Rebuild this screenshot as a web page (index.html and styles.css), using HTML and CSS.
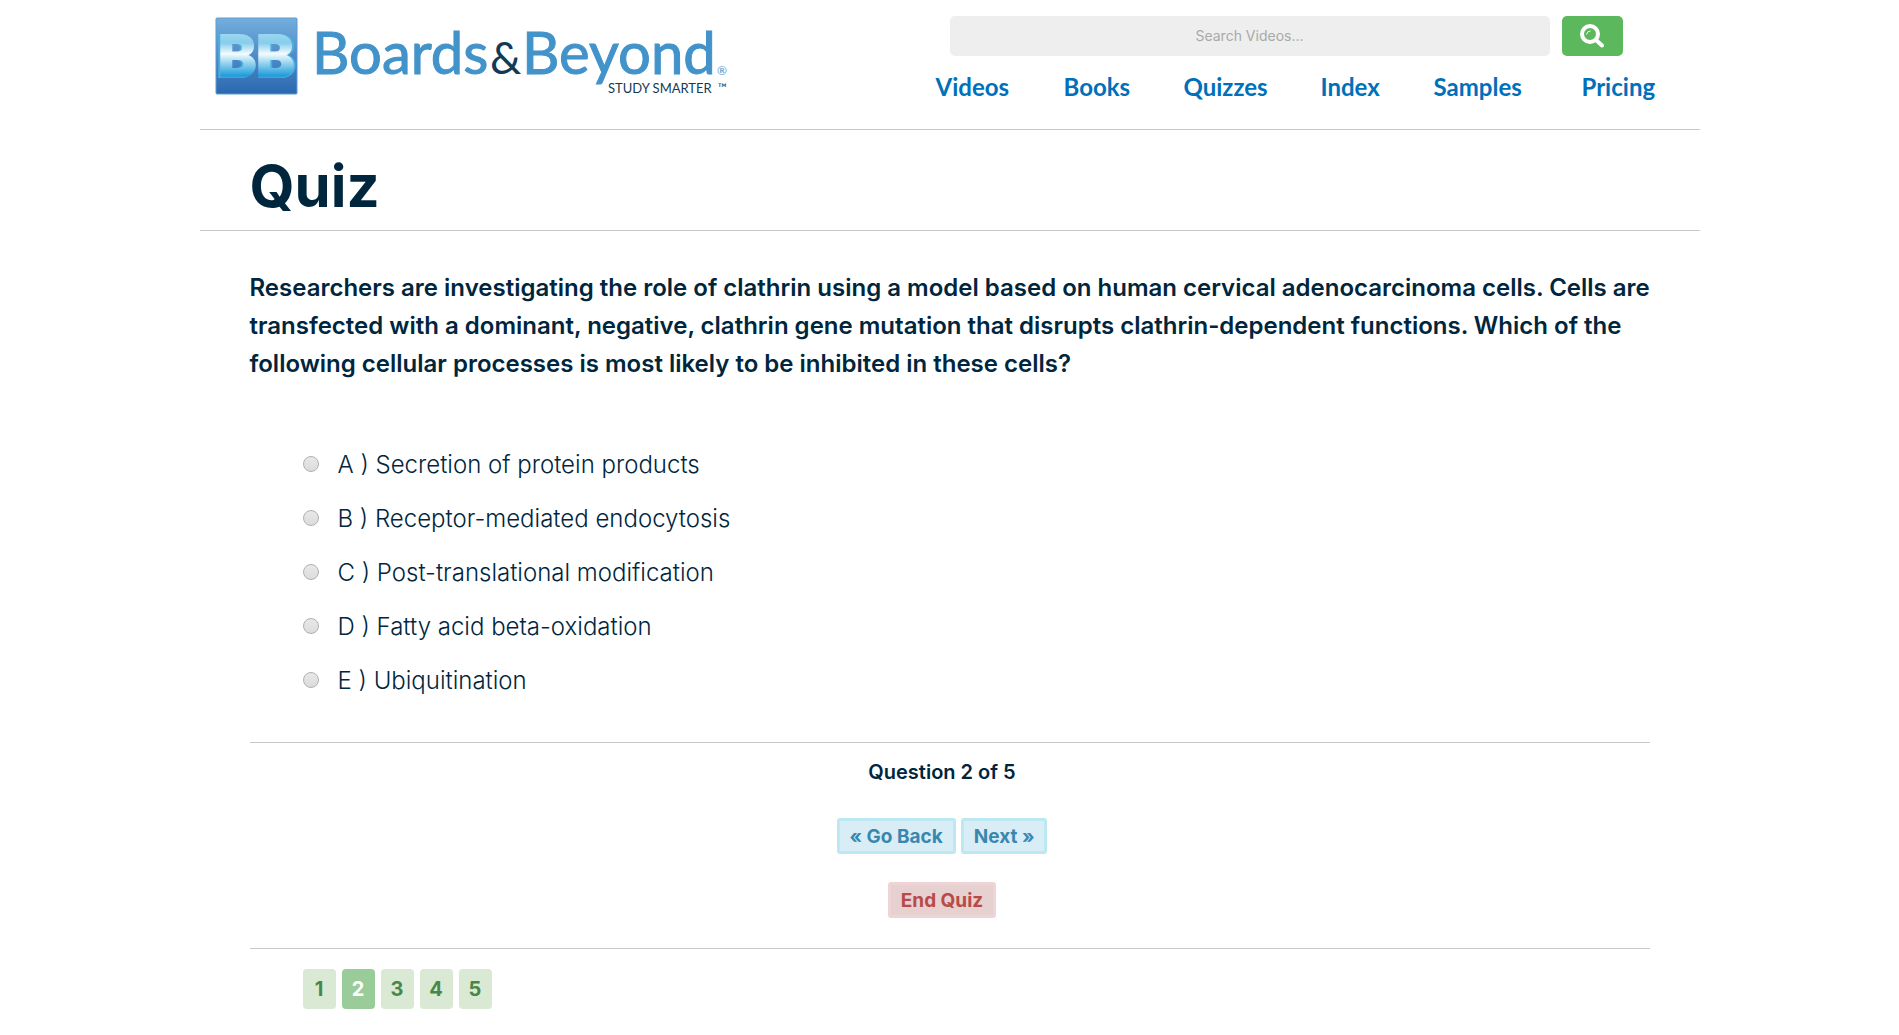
FILE: index.html
```html
<!DOCTYPE html>
<html lang="en">
<head>
<meta charset="utf-8">
<meta name="viewport" content="width=device-width, initial-scale=1">
<title>Quiz | Boards &amp; Beyond</title>
<link rel="stylesheet" href="styles.css">
</head>
<body>
<div class="page">
  <header class="header">
    <a class="logo" href="#" aria-label="Boards &amp; Beyond">
      <svg class="logo-art" viewBox="0 0 520 82" width="520" height="82">
        <defs>
          <linearGradient id="tile" x1="0" y1="0" x2="0" y2="1">
            <stop offset="0" stop-color="#74aedd"/>
            <stop offset="1" stop-color="#2a68b0"/>
          </linearGradient>
          <linearGradient id="face" gradientUnits="userSpaceOnUse" x1="0" y1="14" x2="0" y2="66">
            <stop offset="0" stop-color="#a4dcf2"/>
            <stop offset=".25" stop-color="#86cdec"/>
            <stop offset=".46" stop-color="#f4fbfe"/>
            <stop offset=".6" stop-color="#a9dcf3"/>
            <stop offset=".88" stop-color="#1f9cdb"/>
            <stop offset="1" stop-color="#6cc4ea"/>
          </linearGradient>
        </defs>
        <rect x="1" y="2" width="81" height="76" rx="1" fill="url(#tile)" stroke="#5f9bd0"/>
        <g class="mark" fill="url(#face)" stroke="url(#face)">
          <text class="left" x="3" y="61">B</text>
          <text class="right" x="41" y="61">B</text>
        </g>
        <text class="name" x="97" y="58">Boards</text>
        <text class="amp" x="275" y="58">&amp;</text>
        <text class="name" x="307" y="58">Beyond</text>
        <text class="reg" x="502" y="59">®</text>
        <text class="tagline" x="393" y="77">STUDY SMARTER</text>
        <text class="reg dark" x="503" y="76">™</text>
      </svg>
    </a>
    <div class="tools">
      <form class="search" role="search">
        <input class="search-box" type="text" aria-label="Search videos" placeholder="Search Videos...">
        <button class="search-button" type="button" aria-label="Search">
          <svg viewBox="0 0 24 24" width="24" height="24" fill="none" stroke="#fff">
            <circle cx="10" cy="10" r="8" stroke-width="4"/>
            <path d="M16 16l6 5.500" stroke-width="4" stroke-linecap="round"/>
            <path d="M6.500 10.500a4 4 0 0 1 4-3.500" stroke-width="1"/>
          </svg>
        </button>
      </form>
      <nav class="nav">
        <a href="#">Videos</a>
        <a href="#">Books</a>
        <a href="#">Quizzes</a>
        <a href="#">Index</a>
        <a href="#">Samples</a>
        <a href="#">Pricing</a>
      </nav>
    </div>
  </header>
  <h1 class="title">Quiz</h1>
  <main class="quiz">
    <form class="quiz-form">
      <fieldset class="question">
        <legend class="prompt">Researchers are investigating the role of clathrin using a model based on human cervical adenocarcinoma cells. Cells are transfected with a dominant, negative, clathrin gene mutation that disrupts clathrin-dependent functions. Which of the following cellular processes is most likely to be inhibited in these cells?</legend>
        <label class="option"><input type="radio" name="answer"><span>A ) Secretion of protein products</span></label>
        <label class="option"><input type="radio" name="answer"><span>B ) Receptor-mediated endocytosis</span></label>
        <label class="option"><input type="radio" name="answer"><span>C ) Post-translational modification</span></label>
        <label class="option"><input type="radio" name="answer"><span>D ) Fatty acid beta-oxidation</span></label>
        <label class="option"><input type="radio" name="answer"><span>E ) Ubiquitination</span></label>
      </fieldset>
    </form>
    <section class="controls">
      <p class="progress">Question 2 of 5</p>
      <div class="steps">
        <button class="button" type="button">« Go Back</button>
        <button class="button" type="button">Next »</button>
      </div>
      <button class="button button-end" type="button">End Quiz</button>
    </section>
    <nav class="pages" aria-label="Questions">
      <a href="#">1</a>
      <a class="current" href="#" aria-current="page">2</a>
      <a href="#">3</a>
      <a href="#">4</a>
      <a href="#">5</a>
    </nav>
  </main>
</div>
</body>
</html>
```
FILE: styles.css
```css
* { box-sizing: border-box; }
body {
  margin: 0;
  background: #fff;
  color: #00263e;
  font-family: Inter, "Liberation Sans", sans-serif;
}
.page { max-width: 1500px; margin: 0 auto; }
a { text-decoration: none; }
button, input { font-family: inherit; }

.header {
  display: flex;
  justify-content: space-between;
  padding: 16px 44px 31px 15px;
  border-bottom: 1px solid #c8c8c8;
}
.logo-art { display: block; overflow: visible; }
.logo-art text { font-family: Lato, sans-serif; }
.logo-art .mark text {
  font-family: Inter, "Liberation Sans", sans-serif;
  font-size: 58px;
  font-weight: 800;
  stroke-width: 2px;
}
.mark .left { filter: drop-shadow(-2px 0 0 #49aee0); }
.mark .right { filter: drop-shadow(2px 0 0 #49aee0); }
.name { font-size: 58px; fill: #4293ca; stroke: #4293ca; stroke-width: 1px; }
.amp { font-size: 44px; fill: #123a56; }
.tagline { font-size: 13px; fill: #123a56; stroke: #123a56; stroke-width: 0; }
.reg { font-size: 12px; fill: #4293ca; }
.reg.dark { fill: #123a56; }
.tools { width: 720px; height: 82px; }
.search { display: flex; gap: 12px; padding-left: 14px; }
.search-box {
  width: 600px;
  height: 40px;
  padding: 0 0 2px;
  border: 0;
  border-radius: 5px;
  background: #eee;
  font-size: 14px;
  text-align: center;
}
.search-box::placeholder { color: #a9a9a9; opacity: 1; }
.search-button {
  display: grid;
  place-items: center;
  width: 61px;
  height: 40px;
  padding: 0;
  border: 0;
  border-radius: 5px;
  background: #5cb85c;
}
.nav {
  display: grid;
  grid-template-columns: 128px 120px 137px 113px 148px auto;
  padding-top: 16px;
}
.nav a { color: #0070ba; font: 700 24px/30px Lato, sans-serif; }

.title {
  margin: 0;
  padding: 21px 50px 9px;
  border-bottom: 1px solid #c8c8c8;
  font-size: 58px;
  line-height: 70px;
}
.quiz { padding: 0 50px; }
.quiz-form { padding-top: 38px; }
.question { margin: 0; padding: 54px 0 35px; border: 0; border-bottom: 1px solid #c8c8c8; }
.prompt { margin-right: -10px; padding: 0; font-size: 24px; font-weight: 600; line-height: 38px; }
.option {
  display: flex;
  align-items: center;
  gap: 19px;
  height: 54px;
  padding-left: 53px;
  font-size: 24px;
  font-weight: 300;
}
.option input {
  appearance: none;
  width: 16px;
  height: 16px;
  margin: 0;
  border: 1px solid #b0b0b0;
  border-radius: 50%;
  background: linear-gradient(#e8e8e8, #dcdcdc);
}
.controls {
  display: flex;
  flex-direction: column;
  align-items: center;
  padding: 14px 15px 30px 0;
  border-bottom: 1px solid #c8c8c8;
}
.progress { margin: 0 0 31px; font-size: 20px; font-weight: 600; line-height: 30px; }
.steps { display: flex; gap: 5px; margin-bottom: 28px; }
.button {
  height: 36px;
  padding: 0 10px;
  border: 3px solid #bce8f1;
  border-radius: 3px;
  background: #d9edf7;
  color: #3a87ad;
  font-size: 19px;
  font-weight: 700;
}
.button-end { border-color: #eed3d7; background: #e6d0d0; color: #b94a48; }
.pages { display: flex; gap: 6px; padding: 20px 53px 25px; }
.pages a {
  width: 33px;
  border-radius: 4px;
  background: #dae9d3;
  color: #468847;
  font-size: 20px;
  font-weight: 700;
  line-height: 40px;
  text-align: center;
}
.pages .current { background: #9acc99; color: #fff; }
```
